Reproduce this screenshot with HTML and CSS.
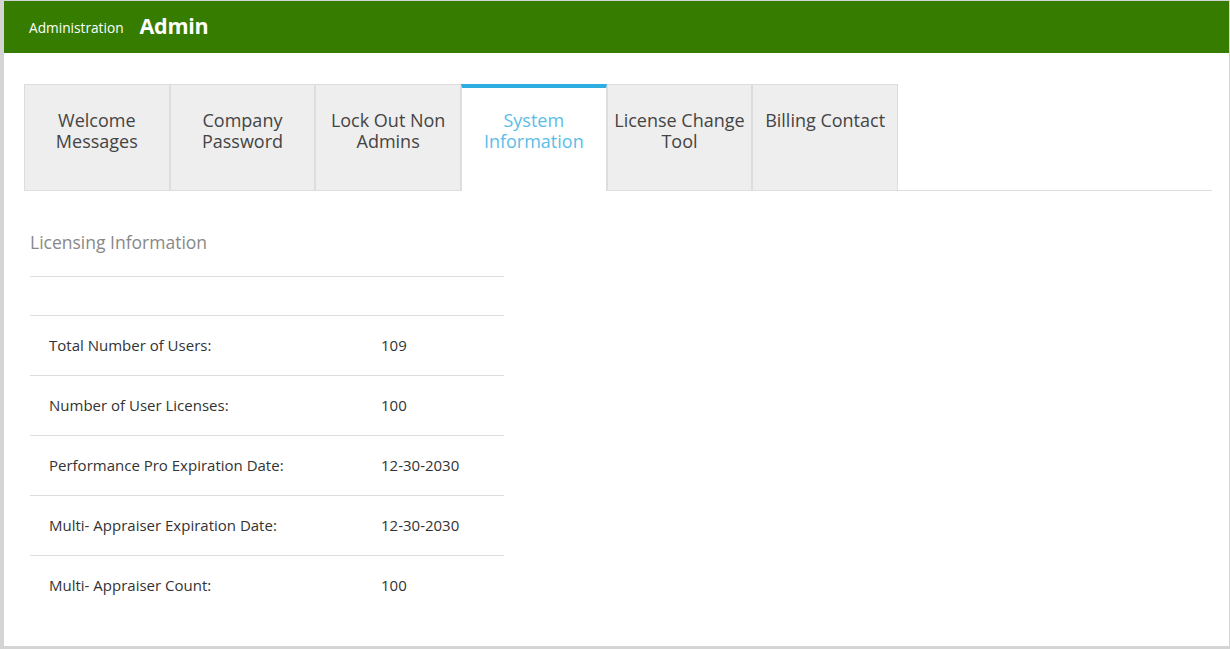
FILE: index.html
```html
<!DOCTYPE html>
<html>
<head>
<meta charset="utf-8">
<link rel="stylesheet" href="styles.css">
</head>
<body>
<div class="frame">
  <header class="topbar">
    <span class="crumb">Administration</span>
    <span class="title">Admin</span>
  </header>
  <main class="main">
    <nav class="tabs">
      <div class="tab">Welcome Messages</div>
      <div class="tab">Company Password</div>
      <div class="tab">Lock Out Non Admins</div>
      <div class="tab active">System Information</div>
      <div class="tab">License Change Tool</div>
      <div class="tab">Billing Contact</div>
    </nav>
    <section class="panel">
      <h2 class="panel-title">Licensing Information</h2>
      <div class="spacer"></div>
      <div class="row"><span class="label">Total Number of Users:</span><span class="value">109</span></div>
      <div class="row"><span class="label">Number of User Licenses:</span><span class="value">100</span></div>
      <div class="row"><span class="label">Performance Pro Expiration Date:</span><span class="value">12-30-2030</span></div>
      <div class="row"><span class="label">Multi- Appraiser Expiration Date:</span><span class="value">12-30-2030</span></div>
      <div class="row"><span class="label">Multi- Appraiser Count:</span><span class="value">100</span></div>
    </section>
  </main>
</div>
</body>
</html>
```
FILE: styles.css
```css
* { box-sizing: border-box; }
html, body { margin: 0; padding: 0; background: #fff; }
body { font-family: "Open Sans", "Noto Sans", sans-serif; color: #333; }
.frame {
  width: 1230px;
  height: 649px;
  border-left: 4px solid #d4d4d4;
  border-top: 1px solid #d4d4d4;
  border-right: 1px solid #d4d4d4;
  border-bottom: 3px solid #d4d4d4;
  overflow: hidden;
}
.topbar {
  height: 52px;
  background: #367c00;
  color: #fff;
  display: flex;
  align-items: center;
  padding-left: 25px;
  padding-bottom: 3px;
}
.crumb { font-size: 13.7px; margin-right: 16px; margin-top: 3px; }
.title { font-size: 21.5px; font-weight: 700; letter-spacing: -0.3px; }
.main { padding: 31px 17px 0 20px; }
.tabs {
  display: flex;
  border-bottom: 1px solid #ddd;
  height: 107px;
}
.tab {
  width: 145.67px;
  flex: none;
  height: 106px;
  background: #eee;
  border: 1px solid #ddd;
  border-bottom: none;
  text-align: center;
  font-size: 18px;
  line-height: 21px;
  color: #444;
  padding: 25px 2px 0;
}
.tab.active {
  background: #fff;
  border-top: 4px solid #2eaee0;
  color: #5bbde6;
  padding-top: 22px;
  height: 107px;
  position: relative;
  z-index: 1;
}
.panel { width: 474px; margin-left: 6px; margin-top: 40px; }
.panel-title {
  margin: 0;
  font-size: 17.5px;
  font-weight: 400;
  color: #888;
  line-height: 22px;
  height: 46px;
  border-bottom: 1px solid #ddd;
}
.spacer { height: 38px; }
.row {
  display: flex;
  align-items: center;
  height: 60px;
  border-top: 1px solid #ddd;
  font-size: 15px;
  color: #333;
  padding-left: 19px;
  padding-bottom: 2px;
}
.label { width: 332px; }
```
